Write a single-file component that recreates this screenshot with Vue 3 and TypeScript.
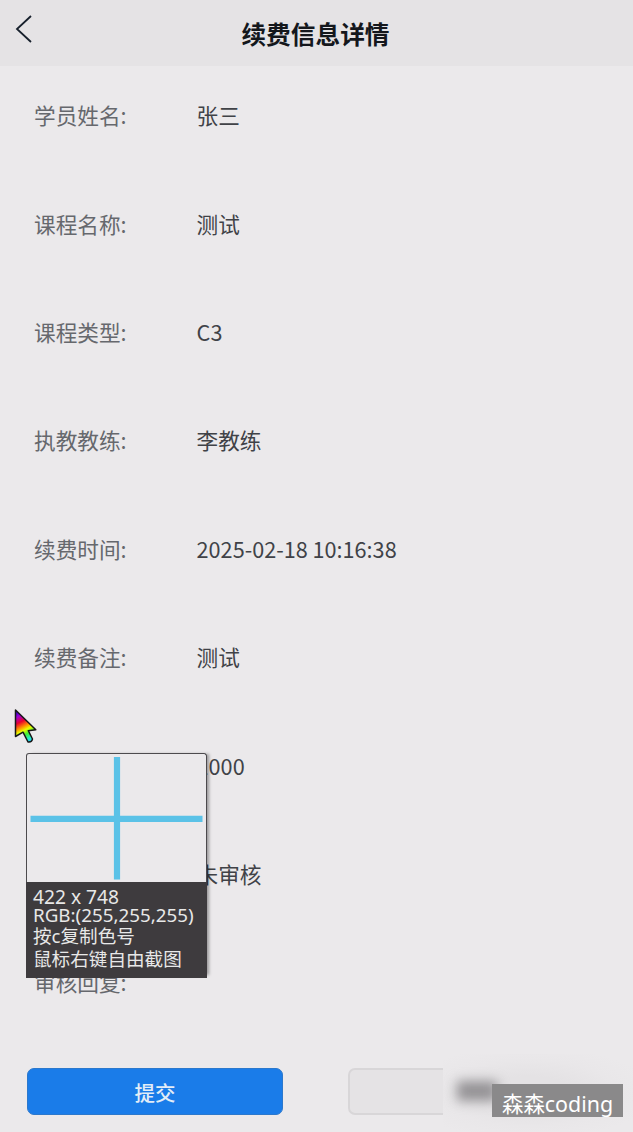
<script setup lang="ts">
interface Field {
  label: string
  value: string
}

const fields: Field[] = [
  { label: '学员姓名:', value: '张三' },
  { label: '课程名称:', value: '测试' },
  { label: '课程类型:', value: 'C3' },
  { label: '执教教练:', value: '李教练' },
  { label: '续费时间:', value: '2025-02-18 10:16:38' },
  { label: '续费备注:', value: '测试' },
  { label: '', value: '1000' },
  { label: '', value: '未审核' },
  { label: '审核回复:', value: '' },
]
</script>

<template>
  <main class="page">
    <header class="header">
      <svg class="back" width="20" height="32" viewBox="0 0 20 32" fill="none" stroke="#17202c" stroke-width="1.8">
        <path d="M17 3 L3 16 L17 29" />
      </svg>
      <h1 class="title">续费信息详情</h1>
    </header>

    <section class="fields">
      <div v-for="(f, i) in fields" :key="i" class="field">
        <span class="label">{{ f.label }}</span>
        <span class="value">{{ f.value }}</span>
      </div>
    </section>

    <footer class="actions">
      <button class="btn primary">提交</button>
      <button class="btn plain"></button>
    </footer>

    <div class="haze"><i class="smudge"></i></div>
    <div class="watermark">森森coding</div>

    <aside class="picker">
      <div class="lens">
        <svg width="178" height="128" viewBox="0 0 178 128">
          <path d="M3.5 64.8H175.5M90 3V125.5" stroke="#5bc2e7" stroke-width="6.2" fill="none" />
        </svg>
      </div>
      <div class="info">
        <p class="l1">422 x 748</p>
        <p class="l2">RGB:(255,255,255)</p>
        <p class="l3">按c复制色号</p>
        <p class="l4">鼠标右键自由截图</p>
      </div>
    </aside>

    <svg class="cursor" width="25" height="37" viewBox="0 0 25 37">
      <defs>
        <linearGradient id="rainbow" gradientUnits="userSpaceOnUse" x1="2" y1="4" x2="17" y2="34">
          <stop offset="0" stop-color="#2000c8" />
          <stop offset=".16" stop-color="#a000d8" />
          <stop offset=".34" stop-color="#e80030" />
          <stop offset=".5" stop-color="#ff9000" />
          <stop offset=".61" stop-color="#e8ff00" />
          <stop offset=".74" stop-color="#40f030" />
          <stop offset=".9" stop-color="#20f0d0" />
          <stop offset="1" stop-color="#30c0ff" />
        </linearGradient>
      </defs>
      <path d="M2.5 2 L22.8 21.8 L15.3 22.7 L19.5 31 Q19 34.5 15 34 L10 24.2 L2.5 28.5 Z" fill="url(#rainbow)" stroke="#171717" stroke-width="1.5" stroke-linejoin="round" />
    </svg>
  </main>
</template>

<style>
body {
  background: #ebe9eb;
  overflow: hidden;
}
</style>

<style scoped>
.page {
  position: relative;
  box-sizing: border-box;
  width: 633px;
  height: 1132px;
  overflow: hidden;
  background: #ebe9eb;
  font-family: "Noto Sans CJK SC", sans-serif;
}
.header {
  position: relative;
  display: flex;
  align-items: center;
  justify-content: center;
  height: 66px;
  background: #e5e3e5;
}
.back {
  position: absolute;
  left: 14px;
  top: 13px;
}
.title {
  margin: 0 2px 0 0;
  font-size: 24.7px;
  line-height: 36px;
  font-weight: 700;
  color: #14171c;
}
.fields {
  display: flex;
  flex-direction: column;
  gap: 76.38px;
  padding: 33.3px 34px 0;
}
.field {
  display: flex;
  height: 32px;
  font-size: 21.65px;
  line-height: 32px;
  white-space: nowrap;
}
.label {
  width: 162.6px;
  color: #66686d;
}
.value {
  color: #404247;
}
.actions {
  display: flex;
  gap: 65px;
  margin: 70px 27px 0;
}
.btn {
  box-sizing: border-box;
  width: 256px;
  height: 47px;
  padding: 0;
  border-radius: 7px;
  font: 500 20.5px/44px "Noto Sans CJK SC", sans-serif;
}
.primary {
  border: 1px solid #2c78cc;
  background: #1a7ce9;
  color: #e3edf7;
}
.plain {
  border: 2px solid #d8d6d8;
  background: #e5e3e5;
}
.haze {
  position: absolute;
  left: 443px;
  top: 1054px;
  width: 190px;
  height: 78px;
  overflow: hidden;
  background: radial-gradient(ellipse at 45% 50%, #e4e2e4 30%, #e9e7e9 60%, #ebe9eb 85%);
}
.smudge {
  position: absolute;
  left: 14px;
  top: 27px;
  width: 40px;
  height: 20px;
  background: #949295;
  filter: blur(6px);
}
.watermark {
  position: absolute;
  left: 492px;
  top: 1084px;
  width: 131px;
  height: 33px;
  box-sizing: border-box;
  padding-left: 10px;
  background: #8a898a;
  color: #fff;
  font-family: "Noto Sans", "Noto Sans CJK SC", sans-serif;
  font-size: 21.4px;
  line-height: 40px;
  white-space: nowrap;
}
.picker {
  position: absolute;
  left: 26px;
  top: 753px;
  width: 181px;
  height: 225px;
  box-shadow: 4px -1px 3px -2px rgba(0, 0, 0, 0.35);
}
.lens {
  box-sizing: border-box;
  height: 129px;
  border: 1.5px solid #4c4a4d;
  border-radius: 3px 3px 0 0;
  border-bottom: 0;
  background: #ebe9eb;
}
.lens svg {
  display: block;
}
.info {
  box-sizing: border-box;
  height: 96px;
  padding: 5px 0 0 7px;
  background: #3e3b3e;
  color: #e8e8e8;
  font-family: "Noto Sans", "Noto Sans CJK SC", sans-serif;
  font-size: 18.6px;
  white-space: nowrap;
}
.info p {
  margin: 0;
  line-height: 19px;
}
.info .l1 {
  font-size: 19.2px;
}
.info .l2 {
  font-size: 18.8px;
}
.info .l3 {
  line-height: 22px;
}
.info .l4 {
  line-height: 24px;
}
.cursor {
  position: absolute;
  left: 13px;
  top: 708px;
}
</style>
